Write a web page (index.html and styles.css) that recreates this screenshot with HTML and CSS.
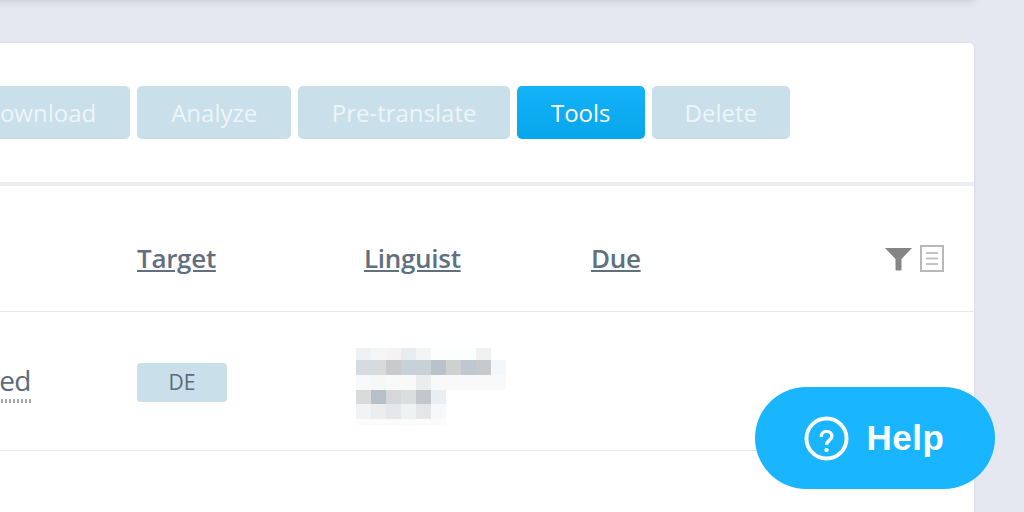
FILE: index.html
```html
<!DOCTYPE html>
<html>
    <head>
        <meta charset="UTF-8" />
        <meta name="viewport" content="width=device-width, initial-scale=1.0" />
        <title>Jobs</title>
        <link rel="stylesheet" href="styles.css">
    </head>
    <body>
        <div class="topbar"></div>
        <div class="card">
            <div class="toolbar">
                <button class="btn">Download</button>
                <button class="btn">Analyze</button>
                <button class="btn btn-pre">Pre-translate</button>
                <button class="btn active">Tools</button>
                <button class="btn btn-delete">Delete</button>
            </div>
            <div class="row head">
                <div></div>
                <div><a class="sort">Target</a></div>
                <div><a class="sort">Linguist</a></div>
                <div><a class="sort">Due</a></div>
                <div class="head-icons">
                    <svg width="27" height="24" viewBox="0 0 27 24">
                        <path d="M0 1h27L16.500 12v10.500a1 1 0 0 1-1 1h-4a1 1 0 0 1-1-1V12z" fill="#858585"/>
                    </svg>
                    <svg width="24" height="27" viewBox="0 0 24 27">
                        <rect x="1" y="1" width="22" height="25" fill="#fff" stroke="#b8b8b8" stroke-width="2"/>
                        <path d="M6 8h12M6 13.500h12M6 19h12" stroke="#c4c4c4" stroke-width="2"/>
                    </svg>
                </div>
            </div>
            <div class="row item">
                <div class="status"><span class="status-text">Completed</span></div>
                <div><span class="badge">DE</span></div>
                <div>
                    <!-- name is blurred in the screenshot -->
                    <svg class="blur" width="150" height="78" viewBox="0 0 150 78" shape-rendering="crispEdges">
                        <g fill="#eef0f2">
                            <rect x="0" y="0" width="15" height="12"/>
                            <rect x="15" y="0" width="15" height="12" fill="#f3f5f7"/>
                            <rect x="30" y="0" width="15" height="12" fill="#f5f2f3"/>
                            <rect x="45" y="0" width="15" height="12" fill="#e6ecef"/>
                            <rect x="60" y="0" width="15" height="12" fill="#f2f4f6"/>
                            <rect x="75" y="0" width="45" height="12" fill="#fcfdfd"/>
                            <rect x="120" y="0" width="15" height="12" fill="#eff0f2"/>
                        </g>
                        <g>
                            <rect x="0" y="12" width="15" height="15" fill="#d5dce1"/>
                            <rect x="15" y="12" width="15" height="15" fill="#d8dbde"/>
                            <rect x="30" y="12" width="15" height="15" fill="#c8cacd"/>
                            <rect x="45" y="12" width="15" height="15" fill="#c6d1d9"/>
                            <rect x="60" y="12" width="15" height="15" fill="#c9d1d8"/>
                            <rect x="75" y="12" width="15" height="15" fill="#b9c2c9"/>
                            <rect x="90" y="12" width="15" height="15" fill="#cfd1d0"/>
                            <rect x="105" y="12" width="15" height="15" fill="#bfc8d1"/>
                            <rect x="120" y="12" width="15" height="15" fill="#c6c9cd"/>
                            <rect x="135" y="12" width="15" height="15" fill="#f2f7fb"/>
                        </g>
                        <g>
                            <rect x="0" y="27" width="150" height="15" fill="#f9f9f9"/>
                            <rect x="15" y="27" width="15" height="15" fill="#f6f7f7"/>
                            <rect x="60" y="27" width="15" height="15" fill="#ebecee"/>
                        </g>
                        <g>
                            <rect x="0" y="42" width="15" height="14" fill="#d9dadc"/>
                            <rect x="15" y="42" width="15" height="14" fill="#b6c0c9"/>
                            <rect x="30" y="42" width="15" height="14" fill="#d5d7d9"/>
                            <rect x="45" y="42" width="15" height="14" fill="#d9dfdf"/>
                            <rect x="60" y="42" width="15" height="14" fill="#c3c7cd"/>
                            <rect x="75" y="42" width="15" height="14" fill="#e9eef2"/>
                        </g>
                        <g>
                            <rect x="0" y="56" width="15" height="15" fill="#f2f3f5"/>
                            <rect x="15" y="56" width="15" height="15" fill="#ecedef"/>
                            <rect x="30" y="56" width="15" height="15" fill="#e6e7e9"/>
                            <rect x="45" y="56" width="15" height="15" fill="#eff2f3"/>
                            <rect x="60" y="56" width="15" height="15" fill="#e5e6e8"/>
                            <rect x="75" y="56" width="15" height="15" fill="#f7f8fa"/>
                        </g>
                        <rect x="0" y="71" width="90" height="6" fill="#fbfbfb"/>
                    </svg>
                </div>
                <div></div>
                <div></div>
            </div>
            <div class="empty"></div>
        </div>
        <a class="help">
            <svg width="45" height="45" viewBox="0 0 46 46">
                <circle cx="23" cy="23" r="20.500" fill="none" stroke="#fff" stroke-width="4"/>
                <path d="M17.500 21.500c0-3.600 2.400-5.700 5.500-5.700 3.200 0 5.500 2 5.500 4.900 0 4.200-5.500 4.300-5.500 8.800" fill="none" stroke="#fff" stroke-width="3.400"/>
                <circle cx="23" cy="34.800" r="2.200" fill="#fff"/>
            </svg>
            <span>Help</span>
        </a>
    </body>
</html>
```

FILE: styles.css
```css
html, body {
    margin: 0;
    height: 100%;
    overflow: hidden;
}

body {
    position: relative;
    background: #e5e8f0;
    font-family: "Open Sans", Arial, sans-serif;
    color: #5a6b7d;
}

.topbar {
    height: 10px;
    margin: -10px 51px 0 -20px;
    background: #fff;
    box-shadow: 0 0 8px rgba(70, 80, 110, 0.28);
}

.card {
    margin: 43px 50px 0 -140px;
    background: #fff;
    border-radius: 5px 5px 0 0;
    box-shadow: 0 0 3px rgba(70, 80, 110, 0.12);
}

.toolbar {
    display: flex;
    justify-content: flex-end;
    gap: 7px;
    height: 96px;
    padding: 43px 184px 0 0;
    border-bottom: 4px solid #eceef1;
}

.btn {
    height: 53px;
    padding: 0 34px;
    border: none;
    border-radius: 5px;
    background: #c9dfe9;
    color: #eef5f8;
    font-family: inherit;
    font-size: 24px;
}

.btn-pre {
    padding: 0 33.500px;
}

.btn-delete {
    padding: 0 33px;
}

.active {
    background: linear-gradient(#14b3fa, #07a5ea);
    color: #fff;
}

.row {
    display: grid;
    grid-template-columns: 277px 227px 227px 1fr auto;
    align-items: center;
    padding-right: 30px;
    border-bottom: 1px solid #e6e8eb;
    box-sizing: border-box;
}

.head {
    height: 126px;
    padding-top: 18px;
}

.sort {
    font-size: 26px;
    font-weight: 600;
    letter-spacing: -0.3px;
    color: #607080;
    text-decoration: underline;
}

.head-icons {
    display: flex;
    align-items: center;
    gap: 8px;
    margin-top: 2px;
}

.item {
    height: 139px;
}

.status {
    display: flex;
    justify-content: flex-end;
    padding-right: 106px;
    margin-top: 4px;
}

.status-text {
    font-size: 28px;
    letter-spacing: -0.5px;
    line-height: 33px;
    border-bottom: 2px dotted #a8a8a8;
}

.status-text::after {
    content: "";
    display: block;
    height: 2px;
    border-bottom: 2px dotted #a8a8a8;
}

.badge {
    display: block;
    width: 90px;
    height: 39px;
    margin-top: 2px;
    border-radius: 4px;
    background: #c9dfe9;
    font-size: 21px;
    line-height: 39px;
    text-align: center;
}

.blur {
    display: block;
    margin: 12px 0 0 -8px;
    filter: blur(0.6px);
}

.empty {
    height: 62px;
}

.help {
    position: absolute;
    left: 755px;
    top: 387px;
    width: 238px;
    height: 102px;
    padding-right: 2px;
    display: flex;
    align-items: center;
    justify-content: center;
    gap: 18px;
    border-radius: 51px;
    background: #1ab5ff;
    color: #fff;
    font-family: "Liberation Sans", Arial, sans-serif;
    font-size: 35px;
    font-weight: 700;
    letter-spacing: 0.5px;
}
```
